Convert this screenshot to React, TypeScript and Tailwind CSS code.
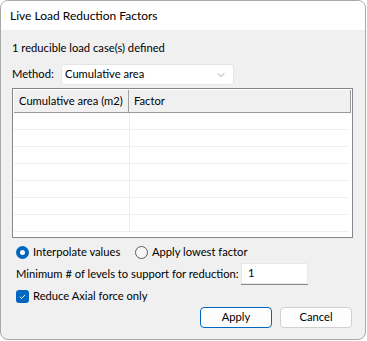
import { ChevronDown } from 'lucide-react'

const font = { fontFamily: 'Lato, "Noto Sans", sans-serif' }

function Radio({ checked, label, className }: { checked?: boolean; label: string; className?: string }) {
  return (
    <label className={`flex items-center gap-[4px] ${className ?? ''}`}>
      {checked ? (
        <span className="flex h-[13px] w-[13px] items-center justify-center rounded-full bg-[#0067c0]">
          <span className="h-[5px] w-[5px] rounded-full bg-white" />
        </span>
      ) : (
        <span className="h-[13px] w-[13px] rounded-full border border-[#5d5d5d] bg-[#f7f7f7]" />
      )}
      <span>{label}</span>
    </label>
  )
}

export default function App() {
  const rows = Array.from({ length: 7 })

  return (
    <div className="h-[341px] w-[367px] whitespace-nowrap bg-white text-[11.2px] text-black" style={font}>
      <div className="flex h-[340px] w-[366px] flex-col overflow-hidden rounded-[8px] border border-[#a8a8a8] bg-[#f0f0f0]">
        {/* title bar */}
        <div className="flex h-[29px] shrink-0 items-center bg-white pl-[9px] pt-[1px] text-[12px]">
          Live Load Reduction Factors
        </div>

        <div className="flex flex-col px-[11px]">
          <div className="mt-[10px] h-[16px] leading-[16px]">1 reducible load case(s) defined</div>

          {/* method */}
          <div className="mt-[8px] flex h-[21px] items-center">
            <span className="w-[49px]">Method:</span>
            <div className="flex h-[21px] w-[173px] items-center justify-between rounded-[3px] border border-[#e5e5e5] bg-white pl-[3px] pr-[6px]">
              <span>Cumulative area</span>
              <ChevronDown className="h-[12px] w-[12px] text-[#606060]" strokeWidth={1.2} />
            </div>
          </div>

          {/* table */}
          <div className="mt-[3px] h-[150px] w-[341px] border border-[#82878f] bg-white p-[1px]">
            <div className="flex h-[23px] border-b border-r border-[#9a9a9a] bg-[#f0f0f0]">
              <div className="flex w-[115px] items-center border-r border-[#a0a0a0] pl-[5px]">Cumulative area (m2)</div>
              <div className="flex flex-1 items-center pl-[5px]">Factor</div>
            </div>
            <div className="flex">
              <div className="w-[116px] border-r border-[#eeeeee]">
                {rows.map((_, i) => (
                  <div key={i} className="h-[17px] border-b border-[#efefef]" />
                ))}
              </div>
              <div className="flex-1 pr-[2px]">
                {rows.map((_, i) => (
                  <div key={i} className="h-[17px] border-b border-[#efefef]" />
                ))}
              </div>
            </div>
          </div>

          {/* options */}
          <div className="ml-[4px] mt-[7px] flex h-[14px] items-center">
            <Radio checked label="Interpolate values" className="w-[119px]" />
            <Radio label="Apply lowest factor" />
          </div>

          <div className="ml-[4px] mt-[4px] flex h-[22px] items-center">
            <span className="w-[225px]">Minimum # of levels to support for reduction:</span>
            <div className="flex h-[22px] w-[67px] items-center border-b border-[#8a8a8a] bg-white pl-[7px] shadow-[inset_0_0_0_1px_#e8e8e8]">
              1
            </div>
          </div>

          <label className="ml-[4px] mt-[4px] flex h-[14px] items-center gap-[4px]">
            <span className="flex h-[13px] w-[13px] items-center justify-center rounded-[3px] bg-[#0067c0]">
              <svg viewBox="0 0 10 10" className="h-[9px] w-[9px]">
                <path d="M2 5.2 L4.1 7.2 L8 3" fill="none" stroke="white" strokeWidth="1" />
              </svg>
            </span>
            <span>Reduce Axial force only</span>
          </label>

          {/* buttons */}
          <div className="mt-[4px] flex justify-end gap-[8px] pr-[2px]">
            <button className="h-[21px] w-[72px] rounded-[4px] border border-[#0067c0] bg-[#fdfdfd]">Apply</button>
            <button className="h-[21px] w-[72px] rounded-[4px] border border-[#d0d0d0] bg-[#fdfdfd]">Cancel</button>
          </div>
        </div>
      </div>
    </div>
  )
}
